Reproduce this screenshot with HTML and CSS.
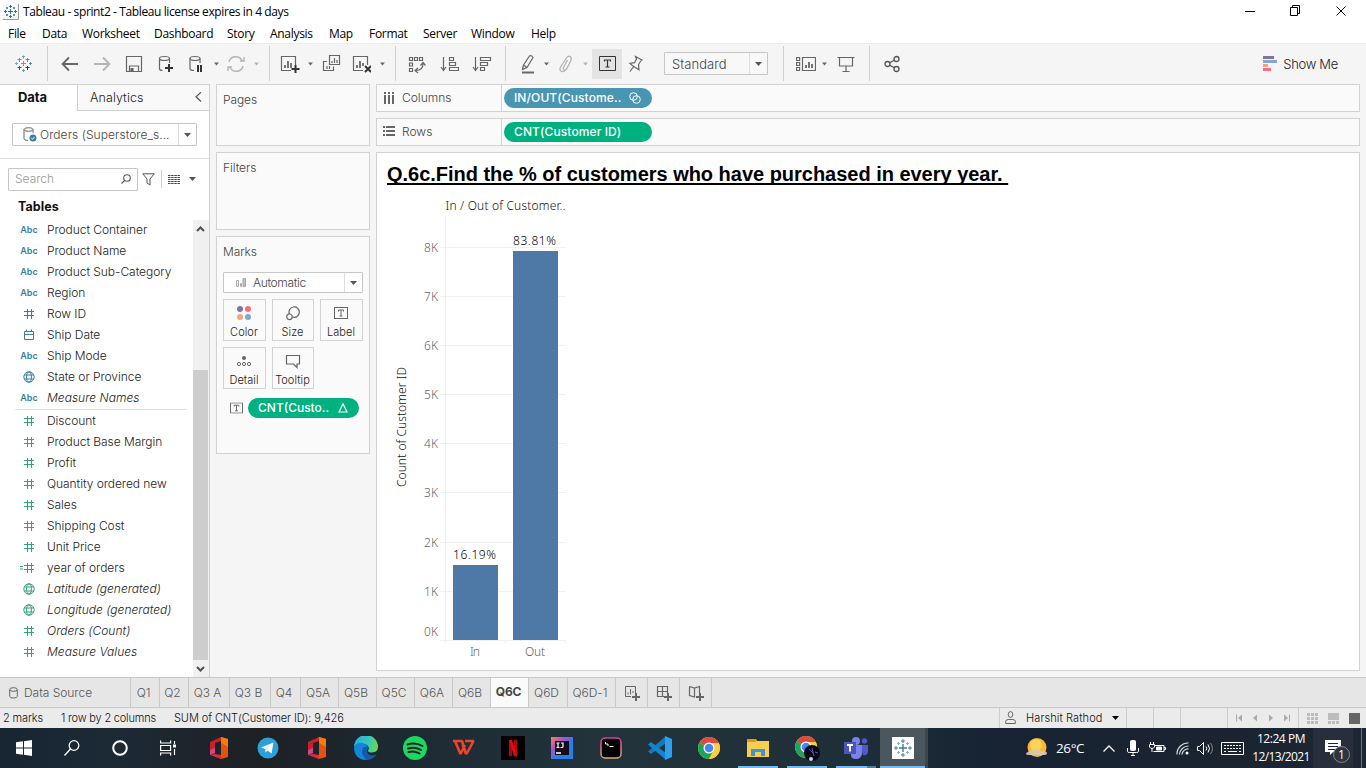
FILE: index.html
```html
<!DOCTYPE html>
<html lang="en">
<head>
<meta charset="utf-8">
<title>Tableau - sprint2</title>
<link rel="stylesheet" href="styles.css">
</head>
<body>
<svg class="defs" width="0" height="0">
  <symbol id="hash" viewBox="0 0 12 12"><path d="M1 3.500h10M1 7.500h10M4.500 1v10M8.500 1v10" fill="none" stroke="currentColor" stroke-width="1.100"/></symbol>
  <symbol id="globe" viewBox="0 0 12 12"><g fill="none" stroke="currentColor"><circle cx="6" cy="6" r="5.200"/><ellipse cx="6" cy="6" rx="2.400" ry="5.200"/><path d="M1.300 4h9.400M1.300 8h9.400"/></g></symbol>
  <symbol id="caret" viewBox="0 0 7 4"><path d="M0 0h7L3.500 4z" fill="currentColor"/></symbol>
  <symbol id="tbox" viewBox="0 0 14 12"><rect x=".5" y=".5" width="13" height="11" fill="none" stroke="currentColor"/><path d="M4.500 4.500v-1.500h5v1.500M7 3v6M5.500 9h3" fill="none" stroke="currentColor"/></symbol>
  <symbol id="office" viewBox="0 0 20 22"><path d="M1 5 12 0v4L6 6v10l-5 2z" fill="#c9202a"/><path d="M1 13l5-2v5l-5 2z" fill="#c84c8c"/><path d="M12 0l7 2v18l-7 2z" fill="#e8500e"/><path d="M12 0l7 2v8l-7-4z" fill="#f57c08"/><path d="M1 18l5-1 6 1v4z" fill="#e82838"/></symbol>
  <symbol id="chrome" viewBox="0 0 22 22"><circle cx="11" cy="11" r="11" fill="#fbc93c"/><path d="M11 11 1.500 5.500A11 11 0 0 1 20.500 5.500z" fill="#dd4b3e"/><path d="M1.500 5.500A11 11 0 0 0 11 22l4.500-8.500L11 11z" fill="#1da45c"/><path d="M11 6h9.800A11 11 0 0 1 11 22l4.500-8z" fill="#fccd42"/><circle cx="11" cy="11" r="5.500" fill="#fff"/><circle cx="11" cy="11" r="4.300" fill="#4486f5"/></symbol>
</svg>

<header class="titlebar">
  <svg class="app-icon" width="16" height="16" viewBox="0 0 16 16"><rect width="15" height="15" fill="#f4f8fa"/><path d="M15.500 0v15.500H0" fill="none" stroke="#999"/><path d="M7.500 5v5M5 7.500h5M7.500 1v3M6 2.500h3M7.500 11v3M6 12.500h3M2.500 6v3M1 7.500h3M12.500 6v3M11 7.500h3M4 3v2M3 4h2M11 3v2M10 4h2M4 10v2M3 11h2M11 10v2M10 11h2" stroke="#2e7596" fill="none"/></svg>
  <span class="app-title">Tableau - sprint2 - Tableau license expires in 4 days</span>
  <svg class="win-controls" width="110" height="20" viewBox="0 0 110 20" fill="none" stroke="#000"><path d="M1 9.500h10M92.500 4.500l9 9M101.500 4.500l-9 9"/><path d="M46.500 5.500h7v8h-7zM48.500 5.500v-2h7v8h-2"/></svg>
</header>
<nav class="menu">
  <span class="m1">File</span><span class="m2">Data</span><span class="m3">Worksheet</span><span class="m4">Dashboard</span><span class="m5">Story</span><span class="m6">Analysis</span><span class="m7">Map</span><span class="m8">Format</span><span class="m9">Server</span><span class="m10">Window</span><span>Help</span>
</nav>

<div class="toolbar">
  <span class="tool w46"><svg width="18" height="18" viewBox="0 0 18 18" fill="none"><path d="M8.500 6v5M6 8.500h5" stroke="#e8762d"/><path d="M4.500 3v4M2.500 4.500h4" stroke="#5c9aa5"/><path d="M12.500 3v4M10.500 4.500h4" stroke="#5b8fa8"/><path d="M4.500 11v4M2.500 12.500h4" stroke="#c72035"/><path d="M12.500 11v4M10.500 12.500h4" stroke="#1f447e"/><path d="M8.500 .5v3M7 1.500h3" stroke="#6ba3b0"/><path d="M8.500 14v3M7 15.500h3" stroke="#7f93b5"/><path d="M1.500 7v3M0 8.500h3" stroke="#7fb0bd"/><path d="M15.500 7v3M14 8.500h3" stroke="#7088a8"/></svg></span>
  <i class="sep"></i>
  <span class="tool w32 ml6"><svg width="20" height="20" viewBox="0 0 20 20" fill="none" stroke="#666" stroke-width="1.800"><path d="M2.500 10H18M9 3.500 2.500 10 9 16.500"/></svg></span>
  <span class="tool w32"><svg width="20" height="20" viewBox="0 0 20 20" fill="none" stroke="#b4b4b4" stroke-width="1.800"><path d="M2 10h15.500M11 3.500 17.500 10 11 16.500"/></svg></span>
  <span class="tool w32"><svg width="20" height="20" viewBox="0 0 20 20" fill="none" stroke="#666" stroke-width="1.200"><path d="M2.500 2.500h15v15h-15zM5.500 17v-5h9v5"/><path d="M7 14.500h2V17H7z" fill="#666"/></svg></span>
  <span class="tool w32"><svg width="20" height="20" viewBox="0 0 20 20" fill="none" stroke="#666" stroke-width="1.200"><ellipse cx="8.500" cy="4.500" rx="5" ry="2"/><path d="M3.500 4.500v10q0 2 3 2M13.500 4.500V9"/><path d="M13 10v8M9 14h8" stroke="#333" stroke-width="2"/></svg></span>
  <span class="tool w28"><svg width="20" height="20" viewBox="0 0 20 20" fill="none" stroke="#666" stroke-width="1.200"><ellipse cx="9" cy="4.500" rx="5" ry="2"/><path d="M4 4.500v10q0 2 4 2M14 4.500V9"/><path d="M12 11v7M15 11v7" stroke="#333" stroke-width="2"/></svg></span>
  <span class="tool w12"><svg class="caret" width="5" height="4"><use href="#caret"/></svg></span>
  <span class="tool w28"><svg width="20" height="20" viewBox="0 0 20 20" fill="none" stroke="#b4b4b4" stroke-width="1.400"><path d="M3 8a7 7 0 0 1 13-1.500M17 12a7 7 0 0 1-13 1.500M2 17v-4h4M18 3v4h-4"/></svg></span>
  <span class="tool w12 dim"><svg class="caret" width="5" height="4"><use href="#caret"/></svg></span>
  <i class="sep ml7"></i>
  <span class="tool w28 ml6"><svg width="20" height="20" viewBox="0 0 20 20" fill="none" stroke="#666" stroke-width="1.200"><path d="M11 16.500H1.500v-14h14V11"/><path d="M5 14v-3M8 14V7M11 14V9" stroke-width="1.800"/><path d="M15.500 11v8M11.500 15h8" stroke="#333" stroke-width="2"/></svg></span>
  <span class="tool w12"><svg class="caret" width="5" height="4"><use href="#caret"/></svg></span>
  <span class="tool w30"><svg width="20" height="20" viewBox="0 0 20 20" fill="none" stroke="#666" stroke-width="1.200"><path d="M8.500 1.500h10v9h-10zM6 7.500H2.500v9h10v-4"/><path d="M11 9V7M13.500 9V4M16 9V6M6 15v-3M8.500 15v-3"/></svg></span>
  <span class="tool w30"><svg width="20" height="20" viewBox="0 0 20 20" fill="none" stroke="#666" stroke-width="1.200"><path d="M12 16.500H2.500v-14h14V11"/><path d="M6 14v-3M9 14V7M12 12V9" stroke-width="1.800"/><path d="M14 12l6 6M20 12l-6 6" stroke="#333" stroke-width="2"/></svg></span>
  <span class="tool w12"><svg class="caret" width="5" height="4"><use href="#caret"/></svg></span>
  <i class="sep ml7"></i>
  <span class="tool w32 ml5"><svg width="20" height="20" viewBox="0 0 20 20" fill="none" stroke="#666" stroke-width="1.200"><path d="M2.500 3.500h3v3h-3zM7.500 3.500h3v3h-3zM12.500 3.500h3v3h-3zM2.500 9h3v3h-3zM2.500 14.500h3v3h-3z"/><path d="M9 16.500q7 0 7-7M11 14l-3 2.500 3 2.500M13.500 11.500l2.500-3 2.500 3"/></svg></span>
  <span class="tool w32"><svg width="20" height="20" viewBox="0 0 20 20" fill="none" stroke="#666" stroke-width="1.200"><path d="M4.500 3v13M2 13l2.500 3.500L7 13M10.500 3.500h4v3h-4zM10.500 8.500h6v3h-6zM10.500 13.500h9v3h-9z"/></svg></span>
  <span class="tool w34"><svg width="20" height="20" viewBox="0 0 20 20" fill="none" stroke="#666" stroke-width="1.200"><path d="M3.500 3v13M1 13l2.500 3.500L6 13M8.500 3.500h10v3h-10zM8.500 8.500h7v3h-7zM8.500 13.500h4v3h-4z"/></svg></span>
  <i class="sep ml6"></i>
  <span class="tool w26 ml8"><svg width="20" height="20" viewBox="0 0 20 20" fill="none" stroke="#666" stroke-width="1.200"><path d="M6.500 11 12.500 2q2-1 3.500 1.500L10 13.500l-4.500 2zM6.500 11l3.500 2.500"/><path d="M5 18.500h12" stroke-width="2"/></svg></span>
  <span class="tool w12"><svg class="caret" width="5" height="4"><use href="#caret"/></svg></span>
  <span class="tool w26"><svg width="20" height="20" viewBox="0 0 20 20" fill="none" stroke="#b4b4b4" stroke-width="1.300"><path d="M12.500 6 8.500 13.500q-.8 2 .6 2.600t2.400-1L16 6.500q1-3-1-4t-3.500 1.500L5.500 13q-1.500 3 1 4.500 2.500.8 4-1.500L14 11"/></svg></span>
  <span class="tool w14 dim"><svg class="caret" width="5" height="4"><use href="#caret"/></svg></span>
  <span class="tool pressed"><svg width="17" height="15" viewBox="0 0 17 15" fill="none" stroke="#333"><path d="M.5.500h16v14H.5z"/><path d="M5.500 5.500V4h6v1.500M8.500 4v7M6.500 11h4" stroke-width="1.200"/></svg></span>
  <span class="tool w28"><svg width="20" height="20" viewBox="0 0 20 20" fill="none" stroke="#666" stroke-width="1.200"><path d="M9.500 2.500l6.500 3.500-1.200.8-2.300 4 .5 5-3.700-2.300L6 11.300 4 9.500l4.500-.8 2-3.700zM7.800 12.500 4 17.500"/></svg></span>
  <span class="select fit"><span class="select-text">Standard</span><span class="drop"><svg width="7" height="4"><use href="#caret"/></svg></span></span>
  <i class="sep ml15"></i>
  <span class="tool w28 ml8"><svg width="20" height="16" viewBox="0 0 20 16" fill="none" stroke="#666" stroke-width="1.200"><path d="M.6 1.500h3v3h-3zM.6 6.500h3v3h-3zM.6 11.500h3v3h-3zM6.500 1.500h13v13h-13z"/><path d="M10 12V9M13 12V6M16 12V8" stroke-width="1.800"/></svg></span>
  <span class="tool w8"><svg class="caret" width="5" height="4"><use href="#caret"/></svg></span>
  <span class="tool w28 ml4"><svg width="18" height="18" viewBox="0 0 18 18" fill="none" stroke="#666" stroke-width="1.200"><path d="M.5 2.500h17M2.500 2.500v8.500h13V2.500M9 11v5M5.500 16.500h7"/></svg></span>
  <i class="sep ml9"></i>
  <span class="tool w32 ml6"><svg width="16" height="18" viewBox="0 0 16 18" fill="none" stroke="#555" stroke-width="1.300"><circle cx="3.500" cy="9" r="2.500"/><circle cx="12.500" cy="4" r="2.500"/><circle cx="12.500" cy="14" r="2.500"/><path d="M5.700 7.800l4.600-2.600M5.700 10.200l4.600 2.600"/></svg></span>
  <span class="showme"><svg width="14" height="15" viewBox="0 0 14 15"><path d="M0 0h11v3H0z" fill="#88719a"/><path d="M0 4h14v3H0z" fill="#82a8cf"/><path d="M0 8h5v3H0z" fill="#f2a57c"/><path d="M0 12h8v3H0z" fill="#f76e82"/></svg><span>Show Me</span></span>
</div>

<main class="work">
  <aside class="data-pane">
    <div class="pane-tabs"><span class="pt-data">Data</span><span class="pt-analytics"><span>Analytics</span><svg width="7" height="11" viewBox="0 0 7 11" fill="none" stroke="#555" stroke-width="1.200"><path d="M6 .3 1 4.800l5 4.700"/></svg></span></div>
    <div class="source"><span class="select orders"><svg width="14" height="15" viewBox="0 0 14 15" fill="none" stroke="#666"><ellipse cx="5.500" cy="2.500" rx="4.500" ry="1.800"/><path d="M1 2.500v9q0 2 4 2M10 2.500V6"/><circle cx="10" cy="11" r="3.500" fill="#3a7fa0" stroke="none"/><path d="M8.300 11l1.200 1.200 2.200-2.400" stroke="#fff"/></svg><span class="select-text">Orders (Superstore_s...</span><span class="drop"><svg width="7" height="4"><use href="#caret"/></svg></span></span></div>
    <div class="search-row"><span class="search"><span>Search</span><svg width="10" height="10" viewBox="0 0 10 10" fill="none" stroke="#555" stroke-width="1.100"><circle cx="6" cy="4" r="3.300"/><path d="M3.700 6.300.5 9.500"/></svg></span><svg class="funnel" width="13" height="13" viewBox="0 0 13 13" fill="none" stroke="#555"><path d="M.8.800h11.400L8 6v6L5 10V6z"/></svg><i></i><svg class="listview" width="12" height="9" viewBox="0 0 12 9" stroke="#444"><path d="M0 .5h12M0 2.500h12M0 4.500h12M0 6.500h12M0 8.500h12" stroke-dasharray="2.500 .65"/></svg><svg class="listcaret" width="7" height="4"><use href="#caret"/></svg></div>
    <h2>Tables</h2>
    <div class="fields-wrap">
      <ul class="fields">
        <li class="dim-f"><b>Abc</b>Product Container</li>
        <li class="dim-f"><b>Abc</b>Product Name</li>
        <li class="dim-f"><b>Abc</b>Product Sub-Category</li>
        <li class="dim-f"><b>Abc</b>Region</li>
        <li class="dim-f"><b><svg width="12" height="12"><use href="#hash"/></svg></b>Row ID</li>
        <li class="dim-f"><b><svg width="12" height="12" viewBox="0 0 12 12" fill="none" stroke="currentColor"><path d="M1.500 2.500h9v8h-9zM1.500 5.500h9M3.500.5v2M8.500.5v2"/></svg></b>Ship Date</li>
        <li class="dim-f"><b>Abc</b>Ship Mode</li>
        <li class="dim-f"><b><svg width="12" height="12"><use href="#globe"/></svg></b>State or Province</li>
        <li class="dim-f"><b>Abc</b><em>Measure Names</em></li>
        <li class="rule"></li>
        <li><b><svg width="12" height="12"><use href="#hash"/></svg></b>Discount</li>
        <li><b><svg width="12" height="12"><use href="#hash"/></svg></b>Product Base Margin</li>
        <li><b><svg width="12" height="12"><use href="#hash"/></svg></b>Profit</li>
        <li><b><svg width="12" height="12"><use href="#hash"/></svg></b>Quantity ordered new</li>
        <li><b><svg width="12" height="12"><use href="#hash"/></svg></b>Sales</li>
        <li><b><svg width="12" height="12"><use href="#hash"/></svg></b>Shipping Cost</li>
        <li><b><svg width="12" height="12"><use href="#hash"/></svg></b>Unit Price</li>
        <li><b class="calc"><svg width="3" height="4" viewBox="0 0 3 4" stroke="currentColor"><path d="M0 .5h3M0 3h3"/></svg><svg width="12" height="12"><use href="#hash"/></svg></b>year of orders</li>
        <li><b><svg width="12" height="12"><use href="#globe"/></svg></b><em>Latitude (generated)</em></li>
        <li><b><svg width="12" height="12"><use href="#globe"/></svg></b><em>Longitude (generated)</em></li>
        <li><b><svg width="12" height="12"><use href="#hash"/></svg></b><em>Orders (Count)</em></li>
        <li><b><svg width="12" height="12"><use href="#hash"/></svg></b><em>Measure Values</em></li>
      </ul>
      <div class="scroll"><svg width="9" height="6" viewBox="0 0 9 6" fill="none" stroke="#505050" stroke-width="2"><path d="M1 5l3.500-3.500L8 5"/></svg><i></i><svg width="9" height="6" viewBox="0 0 9 6" fill="none" stroke="#505050" stroke-width="2"><path d="M1 1l3.500 3.500L8 1"/></svg></div>
    </div>
  </aside>

  <section class="cards">
    <div class="card pages">Pages</div>
    <div class="card filters">Filters</div>
    <div class="card marks">
      <div class="card-title">Marks</div>
      <span class="select mark-type"><svg width="10" height="10" viewBox="0 0 10 10" fill="none" stroke="#aaa"><path d="M.5 2.500h2v6h-2zM4.500 5.500h1v3h-1z"/><path d="M7 .5h2.500v8H7z" fill="#bbb"/></svg><span class="select-text">Automatic</span><span class="drop"><svg width="7" height="4"><use href="#caret"/></svg></span></span>
      <div class="tiles">
        <span><svg width="16" height="16" viewBox="0 0 16 16"><circle cx="4" cy="4" r="3" fill="#88719a"/><circle cx="12" cy="4" r="3" fill="#f76e82"/><circle cx="4" cy="12" r="3" fill="#f2a57c"/><circle cx="12" cy="12" r="3" fill="#82a8cf"/></svg>Color</span>
        <span><svg width="16" height="16" viewBox="0 0 16 16" fill="none" stroke="#666" stroke-width="1.200"><path d="M4.300 9A5.200 5.200 0 1 1 8 12.200"/><circle cx="4.500" cy="11.800" r="2.800"/></svg>Size</span>
        <span><svg class="mid" width="14" height="12"><use href="#tbox"/></svg>Label</span>
        <span><svg width="16" height="16" viewBox="0 0 16 16" fill="none" stroke="#666"><circle cx="8" cy="5" r="2" fill="#666" stroke="none"/><circle cx="3" cy="11" r="1.600"/><circle cx="8" cy="11" r="1.600"/><circle cx="13" cy="11" r="1.600"/></svg>Detail</span>
        <span><svg width="16" height="16" viewBox="0 0 16 16" fill="none" stroke="#666" stroke-width="1.200"><path d="M1.500 2.500h13v8.500H12v3.500L8.500 11h-7z"/></svg>Tooltip</span>
      </div>
      <div class="mark-pill"><svg width="13" height="12" viewBox="0 0 14 12"><use href="#tbox"/></svg><span class="pill green">CNT(Custo..<svg width="10" height="10" viewBox="0 0 10 10" fill="none" stroke="#fff" stroke-width="1.200"><path d="M5 .8 9 9H1z"/></svg></span></div>
    </div>
  </section>

  <section class="sheet">
    <div class="shelf"><span class="shelf-name"><svg width="12" height="12" viewBox="0 0 12 12" stroke="#666" stroke-width="2"><path d="M2 0v2M6 0v2M10 0v2M2 3v9M6 3v9M10 3v9"/></svg>Columns</span><span class="pill blue">IN/OUT(Custome..<svg width="12" height="12" viewBox="0 0 12 12" fill="none" stroke="#fff"><circle cx="4.500" cy="4.500" r="3.800"/><circle cx="7.500" cy="7.500" r="3.800"/></svg></span></div>
    <div class="shelf"><span class="shelf-name"><svg width="12" height="12" viewBox="0 0 12 12" stroke="#666" stroke-width="2"><path d="M0 1h2M3 1h9M0 5h2M3 5h9M0 9h2M3 9h9"/></svg>Rows</span><span class="pill green">CNT(Customer ID)</span></div>
    <div class="viz">
      <h1>Q.6c.Find the % of customers who have purchased in every year.&nbsp;</h1>
      <svg class="chart" width="200" height="470" viewBox="385 196 200 470">
        <text x="445.500" y="210" class="head" textLength="120">In / Out of Customer..</text>
        <path d="M440 247.500h126M440 296.500h126M440 345.500h126M440 394.500h126M440 443.500h126M440 492.500h126M440 542.500h126M440 591.500h126M440 640.500h126M445.500 215v428M505.500 640v3M565.500 640v3" stroke="#f0f0f0" fill="none"/>
        <path d="M453 565h45v75h-45zM513 251h45v389h-45z" fill="#4e79a7"/>
        <g class="tick"><text x="424" y="252" textLength="14">8K</text><text x="424" y="301" textLength="14">7K</text><text x="424" y="350" textLength="14">6K</text><text x="424" y="399" textLength="14">5K</text><text x="424" y="448" textLength="14">4K</text><text x="424" y="497" textLength="14">3K</text><text x="424" y="547" textLength="14">2K</text><text x="424" y="596" textLength="14">1K</text><text x="424" y="636" textLength="14">0K</text><text x="470" y="656" textLength="10">In</text><text x="525" y="656" textLength="20">Out</text></g>
        <text x="453" y="559" class="mark" textLength="43">16.19%</text><text x="513" y="245" class="mark" textLength="43">83.81%</text>
        <text class="axis" transform="translate(406 487) rotate(-90)" textLength="120">Count of Customer ID</text>
      </svg>
    </div>
  </section>
</main>

<nav class="sheets">
  <span class="ds"><svg width="9" height="12" viewBox="0 0 9 12" fill="none" stroke="#666"><ellipse cx="4.500" cy="2.500" rx="3.800" ry="1.800"/><path d="M.7 2.500v7q0 1.500 3.800 1.500t3.800-1.500v-7"/></svg>Data Source</span>
  <span class="t29">Q1</span><span class="t29">Q2</span><span class="t41">Q3 A</span><span class="t41">Q3 B</span><span class="t30">Q4</span><span class="t38">Q5A</span><span class="t38">Q5B</span><span class="t38">Q5C</span><span class="t38">Q6A</span><span class="t38">Q6B</span><span class="t38 active">Q6C</span><span class="t39">Q6D</span><span class="t48">Q6D-1</span>
  <span class="t32"><svg width="16" height="16" viewBox="0 0 16 16" fill="none" stroke="#666"><path d="M7 11.500H1.500v-10h10V8M4 9.500v-2M6.500 9.500V4M9 8V6"/><path d="M12 8v8M8 12h8" stroke-width="2"/></svg></span>
  <span class="t32"><svg width="16" height="16" viewBox="0 0 16 16" fill="none" stroke="#666" stroke-width="1.200"><path d="M8 11.500H1.500v-10h10V8M1.500 6.500h10M6.500 1.500v10"/><path d="M12 8v8M8 12h8" stroke-width="2"/></svg></span>
  <span class="t32"><svg width="16" height="16" viewBox="0 0 16 16" fill="none" stroke="#666" stroke-width="1.200"><path d="M1.500 1.500 6.500 3l5-1.500V8M1.500 1.500v9L6.500 12V3"/><path d="M12 8v8M8 12h8" stroke-width="2"/></svg></span>
</nav>
<div class="status">
  <span class="s1">2 marks</span><span class="s2">1 row by 2 columns</span><span class="s3">SUM of CNT(Customer ID): 9,426</span>
  <span class="user"><svg width="11" height="14" viewBox="0 0 11 14" fill="none" stroke="#666"><ellipse cx="5.500" cy="3.500" rx="2.300" ry="2.900"/><path d="M.7 12.500v-2q0-2 2.500-2h4.600q2.500 0 2.500 2v2z"/></svg><span>Harshit Rathod</span><svg class="black" width="7" height="4"><use href="#caret"/></svg></span>
  <span class="blank27"></span><span class="blank27"></span><span class="blank47"></span>
  <span class="nav"><svg width="55" height="8" viewBox="0 0 55 8" fill="#aaa"><path d="M0 .5h1v7H0zM6 .5v7L2 4zM21 .5v7L17 4zM33 .5v7L37 4zM48 .5v7L52 4zM53 .5h1v7h-1z"/></svg></span>
  <span class="views"><svg width="54" height="11" viewBox="0 0 54 11"><path d="M0 0h3v3H0zM4 0h3v3H4zM8 0h3v3H8zM0 4h3v3H0zM4 4h3v3H4zM8 4h3v3H8zM0 8h3v3H0zM4 8h3v3H4zM8 8h3v3H8zM21 0h11v7H21zM21 8h3v3h-3zM25 8h3v3h-3zM29 8h3v3h-3z" fill="#bcbcbc"/><path d="M42 0h11v11H42z" fill="#666"/></svg></span>
</div>

<footer class="taskbar">
  <span class="tb48"><svg width="16" height="16" viewBox="0 0 16 16" fill="#fff"><path d="M0 2.200 7 1.300V7.500H0zM8 1.200 16 0v7.500H8zM0 8.500h7v6.300L0 13.800zM8 8.500h8V16l-8-1.200z"/></svg></span>
  <span class="tb48"><svg width="16" height="16" viewBox="0 0 16 16" fill="none" stroke="#fff" stroke-width="1.300"><circle cx="10" cy="5.500" r="4.800"/><path d="M6.500 9 .5 15.500"/></svg></span>
  <span class="tb48"><svg width="16" height="16" viewBox="0 0 16 16" fill="none" stroke="#fff" stroke-width="2"><circle cx="8" cy="8" r="6.800"/></svg></span>
  <span class="tb48"><svg width="17" height="16" viewBox="0 0 17 16" fill="none" stroke="#fff" stroke-width="1.200"><path d="M.6 .5v2.500h10V.5M.6 5.500h10v5H.6zM.6 15.500V13h10v2.500M14.500 1v3M14.500 9v6"/><path d="M13 4.500h3v3h-3z" fill="#fff" stroke="none"/></svg></span>
  <span class="tb first"><svg width="20" height="22"><use href="#office"/></svg></span>
  <span class="tb"><svg width="22" height="22" viewBox="0 0 22 22"><circle cx="11" cy="11" r="10.500" fill="#2aa1da"/><path d="M4 10.500 16.500 5.500 14.500 16.500 10.500 13.500 8.500 15.500 8 12z" fill="#fff"/><path d="M8 12l6-4.500-4.500 5-1 3z" fill="#c3d9e8"/></svg></span>
  <span class="tb"><svg width="20" height="22"><use href="#office"/></svg></span>
  <span class="tb"><svg width="24" height="24" viewBox="0 0 24 24"><defs><linearGradient id="eg" x1="0" y1=".3" x2="1" y2=".5"><stop offset="0" stop-color="#29a9e6"/><stop offset=".6" stop-color="#35c8bc"/><stop offset="1" stop-color="#67d84c"/></linearGradient></defs><path d="M12 24A12 12 0 0 1 0 12h14q-3 5 2 7 4 1 7-1-4 6-11 6z" fill="#0f5cae"/><path d="M0 11A12 12 0 0 1 24 11q0 5-6 5.500-4 0-4-2 2-3-1-5.500Q6 5 0 11z" fill="url(#eg)"/><path d="M0 12q2-6 8-5 5 1 6 5-5-2-6 2-1 5 5 10Q1 24 0 12z" fill="#1685d8"/></svg></span>
  <span class="tb"><svg width="24" height="24" viewBox="0 0 24 24"><circle cx="12" cy="12" r="12" fill="#1ed760"/><path d="M4.500 8.500q8-2.500 15 1.500M5 12.500q7-2 13 1.500M5.500 16q6-1.500 11 1.500" fill="none" stroke="#18232c" stroke-width="2" stroke-linecap="round"/></svg></span>
  <span class="tb"><svg width="23" height="18" viewBox="0 0 23 18" fill="none" stroke="#f04428" stroke-width="2.600" stroke-linejoin="bevel"><path d="M0 2h9l4 13M2 2l5.500 13L12 6M9.500 6l4 9L20.500 2H12"/></svg></span>
  <span class="tb"><svg width="24" height="24" viewBox="0 0 24 24"><path d="M0 0h24v24H0z"/><path d="M8 4h3v16l-3 .4zM13 4h3v16.400l-3-.4z" fill="#b1060f"/><path d="M8 4h3l5 16.400-3-.4z" fill="#e50914"/></svg></span>
  <span class="tb"><svg width="22" height="22" viewBox="0 0 22 22"><defs><linearGradient id="ij" x2="1" y2="1"><stop offset="0" stop-color="#f58a43"/><stop offset=".3" stop-color="#b74fc9"/><stop offset=".6" stop-color="#297ee8"/></linearGradient></defs><path d="M0 0h22v22H0z" fill="url(#ij)"/><path d="M4 4h14v14H4z" fill="#160b19"/><path d="M5.500 6h3M7 6v4.500M5.500 10.500h3M10 6h2v3.500q0 1-1.200 1H9.500" stroke="#fff" stroke-width="1.200" fill="none"/><path d="M5 15h5v2H5z" fill="#ccc"/></svg></span>
  <span class="tb"><svg width="22" height="22" viewBox="0 0 22 22"><defs><linearGradient id="tm" x2="0" y2="1"><stop offset="0" stop-color="#d83bad"/><stop offset="1" stop-color="#e5a66d"/></linearGradient></defs><rect x="1" y="1" width="20" height="20" rx="4" fill="#000" stroke="url(#tm)" stroke-width="1.500"/><path d="M5.500 5v2h2.500v2M9.500 9.500h4" stroke="#fff" fill="none"/></svg></span>
  <span class="tb"><svg width="24" height="24" viewBox="0 0 24 24"><path d="M18 0v7L3 18 0 15.500z" fill="#1679bf"/><path d="M0 8.500 3 6l15 11v7z" fill="#0f86cf"/><path d="M17 0l7 3v18l-7 3z" fill="#2ca0ef"/></svg></span>
  <span class="tb"><svg width="22" height="22"><use href="#chrome"/></svg></span>
  <span class="tb run"><svg width="22" height="20" viewBox="0 0 22 20"><path d="M0 1h9l1 2h12v16H0z" fill="#f8cd50"/><path d="M0 1h9v3H0z" fill="#dd9e08"/><path d="M4 18v-7h14v7h-4v-4H8v4z" fill="#3b95d5"/></svg></span>
  <span class="tb run"><svg width="26" height="26" viewBox="0 0 26 26"><svg x="1" y="1" width="22" height="22"><use href="#chrome"/></svg><circle cx="18" cy="18" r="8" fill="#070817"/><path d="M15 14l4 4M18 13l2 8M21 17l3 1" stroke="#5758a8"/><circle cx="17" cy="24" r="2" fill="#c9d8e6"/></svg></span>
  <span class="tb run split"><svg width="24" height="24" viewBox="0 0 24 24"><circle cx="12" cy="5" r="4" fill="#7b83eb"/><circle cx="20.500" cy="5" r="2.700" fill="#5059c9"/><path d="M16 9h8v7q-1 4-5 3z" fill="#5059c9"/><path d="M7 9h11v9q-1 5-6 5t-5-4z" fill="#7b83eb"/><path d="M0 6h12v12H0z" fill="#4b53bc"/><path d="M3 9h6M6 9v6.500" stroke="#fff" stroke-width="1.800"/></svg></span>
  <span class="tb run current"><svg width="22" height="22" viewBox="0 0 22 22"><path d="M0 0h22v22H0z" fill="#fff"/><g stroke="#3f7c9b" fill="none"><path d="M11 7v8M7 11h8" stroke-width="1.400"/><path d="M11 2v4M9 4h4M11 16v4M9 18h4M4 9v4M2 11h4M18 9v4M16 11h4"/><path d="M6.500 5v3M5 6.500h3M15.500 5v3M14 6.500h3M6.500 14v3M5 15.500h3M15.500 14v3M14 15.500h3" stroke="#7fb2cc"/></g></svg></span>
  <div class="tray">
    <svg class="weather" width="24" height="22" viewBox="0 0 24 22"><circle cx="12" cy="10.500" r="9.500" fill="#fbb72f"/><circle cx="11" cy="8" r="6" fill="#fdd35c"/><path d="M1 17q0-2 4-2.500 2-3 6-2.500t5 2q6 0 6 2t-3 2H4q-3 0-3-1z" fill="#d9c8b3" opacity=".9"/></svg>
    <span class="temp">26°C</span>
    <svg class="up" width="12" height="7" viewBox="0 0 12 7" fill="none" stroke="#fff" stroke-width="1.300"><path d="M.5 6.500 6 1l5.500 5.500"/></svg>
    <svg class="mic" width="12" height="16" viewBox="0 0 12 16" fill="none" stroke="#fff"><rect x="3.500" y=".5" width="5" height="10" rx="1" fill="#fff"/><path d="M.5 8v3.500q0 1 2 1h7q2 0 2-1V8M6 12v3M4 15.500h4"/></svg>
    <svg class="bat" width="17" height="12" viewBox="0 0 17 12" fill="none" stroke="#fff"><path d="M6 3.500h9v6H4.500M15 5.500h1.500v2H15M1.500 0v2.500M4.500 0v2.500M.5 2.500h5V5q-1 1.500-2.500 1.500T.5 5zM3 6.500V10"/><path d="M7.500 5h5v3h-5z" fill="#fff"/></svg>
    <svg class="wifi" width="13" height="13" viewBox="0 0 13 13" fill="none" stroke="#d5d9dc" stroke-width="1.200"><path d="M1 12.500A11 11 0 0 1 12.500 1M3.500 12.500a9 9 0 0 1 9-8.500M6 12.500A6 6 0 0 1 12.500 7"/><circle cx="11" cy="11" r="1.500" fill="#fff" stroke="none"/></svg>
    <svg class="vol" width="17" height="13" viewBox="0 0 17 13" fill="none" stroke="#fff"><path d="M.5 4.500h2l4-4v12l-4-4h-2zM9 4.500q1.500 2 0 4M11 2.500q3 4 0 8"/><path d="M13.500 1q4 5.500 0 11" stroke="#888"/></svg>
    <svg class="kbd" width="23" height="13" viewBox="0 0 23 13" fill="none" stroke="#fff"><path d="M.5.500h22v12H.5z"/><path d="M3 3.500h17M3 6.500h17" stroke-dasharray="2 1"/><path d="M3 9.500h2M7 9.500h9M18 9.500h2"/></svg>
    <span class="clock"><span>12:24 PM</span><span class="date">12/13/2021</span></span>
    <span class="notif"><svg width="16" height="15" viewBox="0 0 16 15"><path d="M0 0h16v12H8l-3 3v-3H0z" fill="#fff"/><path d="M3 3.500h10M3 6.500h10M3 9.500h7" stroke="#1d2733"/></svg><span class="badge">1</span></span>
    <i class="peek"></i>
  </div>
</footer>
</body>
</html>
```
FILE: styles.css
```css
* { box-sizing: border-box; }
body { margin: 0; width: 1366px; height: 768px; overflow: hidden; display: flex; flex-direction: column; background: #fff; font: 350 12px/16px Inter, "Open Sans", sans-serif; color: #222; }
svg { display: block; flex: none; }
.defs { position: absolute; }

.titlebar { height: 24px; flex: none; display: flex; align-items: center; padding-left: 3px; font-family: "Open Sans", sans-serif; font-weight: 400; color: #000; }
.app-title { margin-left: 4px; letter-spacing: -.39px; }
.win-controls { margin-left: auto; margin-right: 12px; }
.menu { height: 19px; flex: none; display: flex; align-items: center; padding-left: 8px; font-family: "Open Sans", sans-serif; font-weight: 400; color: #000; letter-spacing: -.3px; }
.menu .m1 { width: 34px; } .menu .m2 { width: 40px; } .menu .m3 { width: 72px; } .menu .m4 { width: 73px; }
.menu .m5 { width: 43px; } .menu .m6 { width: 59px; } .menu .m7 { width: 40px; } .menu .m8 { width: 54px; }
.menu .m9 { width: 48px; } .menu .m10 { width: 60px; }

.toolbar { height: 41px; flex: none; display: flex; align-items: center; background: #f5f5f5; border-top: 1px solid #ededed; padding-bottom: 1px; }
.tool { display: flex; justify-content: center; align-items: center; flex: none; height: 30px; color: #666; }
.tool.dim { color: #b4b4b4; }
.sep { width: 1px; height: 35px; background: #d0d0d0; flex: none; }
.w8 { width: 8px; } .w12 { width: 12px; } .w14 { width: 14px; } .w26 { width: 26px; } .w28 { width: 28px; } .w30 { width: 30px; } .w32 { width: 32px; } .w34 { width: 34px; } .w46 { width: 47px; }
.ml4 { margin-left: 4px; } .ml5 { margin-left: 5px; } .ml6 { margin-left: 6px; } .ml7 { margin-left: 7px; } .ml8 { margin-left: 8px; } .ml9 { margin-left: 9px; } .ml15 { margin-left: 15px; }
.pressed { width: 30px; background: #e4e4e4; }
.select { display: flex; align-items: center; background: #fff; border: 1px solid #c6c6c6; border-radius: 1px; color: #444; }
.select-text { flex: 1; white-space: nowrap; }
.drop { width: 18px; align-self: stretch; border-left: 1px solid #ddd; display: flex; align-items: center; justify-content: center; color: #555; }
.fit { width: 104px; height: 23px; margin-left: 14px; background: #f8f8f8; }
.fit .select-text { padding-left: 7px; font-size: 13px; letter-spacing: .05px; }
.showme { margin-left: auto; margin-right: 28px; display: flex; align-items: center; gap: 6px; font-size: 13px; letter-spacing: -.3px; }

.work { height: 593px; flex: none; display: flex; background: #f5f5f5; }
.data-pane { width: 210px; background: #fff; border-right: 1px solid #d0d0d0; border-top: 1px solid #d0d0d0; display: flex; flex-direction: column; }
.pane-tabs { display: flex; height: 26px; flex: none; color: #222; }
.pt-data { width: 77px; padding: 5px 0 0 18px; font-weight: 700; font-size: 13px; line-height: 15px; color: #111; letter-spacing: -.1px; }
.pt-analytics { flex: 1; display: flex; justify-content: space-between; align-items: center; background: #f9f9f9; border-left: 1px solid #d0d0d0; border-bottom: 1px solid #d0d0d0; padding: 0 7px 0 12px; font-size: 12.500px; letter-spacing: .08px; }
.source { height: 48px; flex: none; padding: 12px 0 0 12px; border-bottom: 1px solid #ddd; }
.orders { width: 185px; height: 23px; padding-left: 10px; }
.orders .select-text { padding-left: 3px; letter-spacing: .06px; }
.search-row { display: flex; align-items: center; height: 24px; flex: none; margin: 8px 0 0 8px; color: #555; }
.search { width: 130px; height: 23px; border: 1px solid #c6c6c6; border-radius: 1px; display: flex; align-items: center; justify-content: space-between; padding: 0 6px; color: #999; }
.funnel { margin-left: 4px; }
.search-row i { width: 1px; height: 18px; background: #d0d0d0; margin-left: 6px; }
.listview { margin-left: 6px; } .listcaret { margin-left: 9px; }
h2 { margin: 7px 0 4px 18px; font-size: 12.500px; line-height: 17px; color: #111; letter-spacing: .05px; }
.fields-wrap { flex: 1; display: flex; min-height: 0; }
.fields { list-style: none; margin: 0; padding: 0 8px 0 15px; width: 193px; letter-spacing: -.05px; }
.fields li { height: 21px; display: flex; align-items: center; color: #222; white-space: nowrap; }
.fields b { width: 26px; margin-left: 1px; margin-right: 5px; display: flex; justify-content: center; align-items: center; font-size: 9px; font-weight: 600; color: #34a27c; }
.fields .calc { padding-right: 3px; }
.fields .dim-f b { color: #3a7fa0; }
.fields em { font-style: italic; letter-spacing: .02px; }
.fields .rule { height: 1px; margin-top: 1px; background: #ddd; width: 171px; }
.scroll { width: 16px; margin-top: 1px; background: #f0f0f0; display: flex; flex-direction: column; align-items: center; padding: 6px 1px 6px 0; }
.scroll i { width: 15px; height: 290px; background: #cdcdcd; margin: 138px 0 6px; flex: none; }

.cards { width: 154px; margin-left: 6px; display: flex; flex-direction: column; gap: 6px; }
.card { background: #fafafa; border: 1px solid #d2d2d2; padding: 7px 6px; color: #444; letter-spacing: -.08px; }
.pages { height: 62px; } .filters { height: 78px; } .marks { height: 218px; }
.mark-type { width: 140px; height: 21px; margin-top: 12px; padding-left: 12px; }
.mark-type .select-text { padding-left: 7px; letter-spacing: -.35px; }
.tiles { display: grid; grid-template-columns: 43px 42px 43px; column-gap: 6px; row-gap: 6px; margin-top: 6px; }
.tiles span { height: 42px; border: 1px solid #d2d2d2; display: flex; flex-direction: column; align-items: center; padding-top: 5px; gap: 3px; font-size: 11px; line-height: 16px; color: #222; letter-spacing: .04px; padding-right: 1px; }
.tiles .mid { margin: 2px 0; color: #666; }
.mark-pill { display: flex; align-items: center; margin: 9px 0 0 7px; gap: 5px; color: #666; }
.pill { height: 20px; border-radius: 10px; display: flex; align-items: center; justify-content: space-between; color: #fff; font-weight: 500; padding: 0 11px 0 10px; letter-spacing: .1px; }
.mark-pill .pill { width: 111px; letter-spacing: 0; }
.green { background: #00b180; } .blue { background: #4996b2; }

.sheet { width: 984px; margin-left: 6px; display: flex; flex-direction: column; gap: 6px; }
.shelf { height: 28px; flex: none; display: flex; align-items: center; background: #fafafa; border: 1px solid #d2d2d2; }
.shelf-name { width: 125px; height: 26px; border-right: 1px solid #d2d2d2; display: flex; align-items: center; gap: 7px; padding-left: 6px; color: #444; letter-spacing: 0; }
.shelf .pill { width: 148px; margin-left: 2px; }
.viz { height: 519px; background: #fff; border: 1px solid #d2d2d2; padding: 9px 0 0 10px; }
h1 { margin: 0; font: bold 20px/24px "Liberation Sans", Arial, sans-serif; color: #000; white-space: nowrap; text-decoration: underline; text-decoration-thickness: 2px; text-underline-offset: 2px; text-decoration-skip-ink: none; letter-spacing: -.02px; }
.chart { margin: 10px 0 0 -2px; font: 350 12px "Noto Sans", sans-serif; }
.head, .axis { fill: #111; } .tick { fill: #666; } .mark { fill: #000; }

.sheets { height: 31px; flex: none; display: flex; background: #e6e6e6; border-top: 1px solid #c8c8c8; border-bottom: 1px solid #c8c8c8; color: #555; }
.sheets span { border-right: 1px solid #c8c8c8; display: flex; align-items: center; justify-content: center; padding-right: 3px; letter-spacing: -.05px; }
.sheets .ds { width: 131px; justify-content: flex-start; padding-left: 9px; gap: 6px; letter-spacing: -.03px; }
.sheets .t29 { width: 29px; } .sheets .t30 { width: 30px; } .sheets .t32 { width: 32px; padding: 0; } .sheets .t38 { width: 38px; } .sheets .t39 { width: 39px; } .sheets .t41 { width: 41px; } .sheets .t48 { width: 48px; }
.sheets .active { background: #fafafa; font-weight: 700; color: #444; letter-spacing: -.2px; padding-right: 2px; padding-bottom: 1px; }
.status { height: 20px; flex: none; display: flex; align-items: center; background: #ebebeb; font-size: 11px; color: #111; }
.s1 { width: 58px; padding-left: 3px; letter-spacing: -.15px; } .s2 { width: 116px; padding-left: 3px; letter-spacing: -.2px; } .s3 { letter-spacing: -.08px; }
.user { margin-left: auto; width: 128px; height: 20px; border-left: 1px solid #ccc; border-right: 1px solid #ccc; display: flex; align-items: center; padding-left: 5px; }
.user span { width: 86px; margin-left: 10px; letter-spacing: .1px; } .user .black { color: #000; }
.blank27, .blank47 { width: 27px; height: 20px; border-right: 1px solid #ccc; } .blank47 { width: 47px; }
.nav { width: 71px; height: 20px; border-right: 1px solid #ccc; padding: 6px 0 0 8px; }
.views { width: 67px; padding-left: 8px; }

.taskbar { height: 40px; flex: none; display: flex; background: linear-gradient(90deg, #182532 0, #1c2a36 120px, #1e2023 260px, #1d2932 390px, #22333b 600px, #1e2f38 850px, #172333 1000px, #1a2431 1200px, #1d2733 1366px); color: #fff; font-family: "Open Sans", sans-serif; font-weight: 400; }
.tb48 { width: 48px; display: flex; align-items: center; justify-content: center; }
.tb { width: 48.950px; display: flex; align-items: center; justify-content: center; }
.first { margin-left: 3px; }
.run { background: linear-gradient(#76b9ed, #76b9ed) 50% 100% / 40px 2px no-repeat; }
.split { background: linear-gradient(90deg, #76b9ed 31px, #4c7ca0 31px) 50% 100% / 40px 2px no-repeat; }
.current { width: 48px; background: linear-gradient(#76b9ed, #76b9ed) 50% 100% / 100% 2px no-repeat, #4a575f; border-right: 3px solid #3a474f; }
.tray { margin-left: auto; display: flex; align-items: center; width: 341px; flex: none; }
.temp { width: 31px; margin-left: 7px; font-size: 13.500px; letter-spacing: -.4px; }
.up { margin-left: 16px; } .mic { margin-left: 12px; } .bat { margin-left: 10px; } .wifi { margin-left: 10px; } .vol { margin-left: 8px; } .kbd { margin-left: 7px; }
.clock { width: 69px; display: flex; flex-direction: column; align-items: center; line-height: 18px; letter-spacing: -.45px; padding-left: 5px; }
.clock .date { letter-spacing: -.6px; }
.notif { width: 40px; height: 40px; background: #262f3b; position: relative; padding: 12px 0 0 12px; }
.badge { position: absolute; left: 20px; top: 18px; width: 17px; height: 17px; border-radius: 9px; background: #2c3640; border: 1px solid #888; font-size: 12px; line-height: 15px; text-align: center; }
.peek { width: 1px; height: 40px; background: #6b737b; margin-left: 8px; }
```
